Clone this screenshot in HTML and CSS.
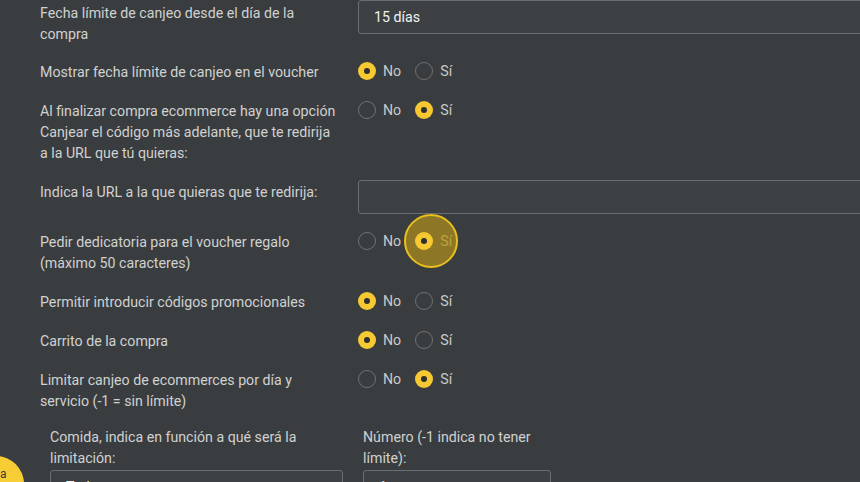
FILE: index.html
```html
<!DOCTYPE html>
<html lang="es">
<head>
<meta charset="utf-8">
<title>Configuración voucher</title>
<link rel="stylesheet" href="styles.css">
</head>
<body>
<div class="form">
  <div class="row row-input-first">
    <div class="label label-top">Fecha límite de canjeo desde el día de la compra</div>
    <div class="control"><div class="input">15 días</div></div>
  </div>

  <div class="row">
    <div class="label">Mostrar fecha límite de canjeo en el voucher</div>
    <div class="control">
      <div class="radios">
        <span class="radio checked"></span><span class="opt">No</span>
        <span class="radio"></span><span class="opt">Sí</span>
      </div>
    </div>
  </div>

  <div class="row">
    <div class="label">Al finalizar compra ecommerce hay una opción Canjear el código más adelante, que te redirija a la URL que tú quieras:</div>
    <div class="control">
      <div class="radios">
        <span class="radio"></span><span class="opt">No</span>
        <span class="radio checked"></span><span class="opt">Sí</span>
      </div>
    </div>
  </div>

  <div class="row">
    <div class="label label-input">Indica la URL a la que quieras que te redirija:</div>
    <div class="control"><div class="input"></div></div>
  </div>

  <div class="row">
    <div class="label">Pedir dedicatoria para el voucher regalo (máximo 50 caracteres)</div>
    <div class="control">
      <div class="radios">
        <span class="radio"></span><span class="opt">No</span>
        <span class="radio-wrap"><span class="ripple"></span><span class="radio checked"></span></span><span class="opt opt-dim">Sí</span>
      </div>
    </div>
  </div>

  <div class="row row-lower">
    <div class="label">Permitir introducir códigos promocionales</div>
    <div class="control">
      <div class="radios">
        <span class="radio checked"></span><span class="opt">No</span>
        <span class="radio"></span><span class="opt">Sí</span>
      </div>
    </div>
  </div>

  <div class="row">
    <div class="label">Carrito de la compra</div>
    <div class="control">
      <div class="radios">
        <span class="radio checked"></span><span class="opt">No</span>
        <span class="radio"></span><span class="opt">Sí</span>
      </div>
    </div>
  </div>

  <div class="row">
    <div class="label">Limitar canjeo de ecommerces por día y servicio (-1 = sin límite)</div>
    <div class="control">
      <div class="radios">
        <span class="radio"></span><span class="opt">No</span>
        <span class="radio checked"></span><span class="opt">Sí</span>
      </div>
    </div>
  </div>

  <div class="subrow">
    <div class="subcol subcol-wide">
      <div class="label">Comida, indica en función a qué será la limitación:</div>
      <div class="input input-select">Todos<span class="caret"></span></div>
    </div>
    <div class="subcol subcol-narrow">
      <div class="label">Número (-1 indica no tener límite):</div>
      <div class="input">1</div>
    </div>
  </div>
</div>

<div class="fab"><span class="fab-text">a</span></div>
</body>
</html>
```

FILE: styles.css
```css
html, body {
  margin: 0;
  padding: 0;
}

body {
  background: #3a3d3f;
  font-family: Roboto, "Noto Sans", "Liberation Sans", sans-serif;
  font-size: 14.2px;
  color: #d0d1d1;
  width: 860px;
  height: 482px;
  overflow: hidden;
  position: relative;
}

.form {
  width: 1100px;
  padding-left: 40px;
  display: flex;
  flex-direction: column;
  gap: 17px;
}

.row {
  display: grid;
  grid-template-columns: 318px 1fr;
  align-items: start;
  min-height: 22px;
}

.row-lower {
  margin-top: 1px;
}

.label {
  line-height: 21px;
  max-width: 297px;
  color: #d0d1d1;
  padding-top: 1px;
  margin-bottom: -1px;
}

.label-top {
  padding-top: 3px;
}

.label-input {
  padding-top: 2px;
}

.control {
  min-width: 0;
}

.input {
  box-sizing: border-box;
  height: 34px;
  border: 1px solid #6b6e70;
  border-radius: 3px;
  background: #3e4143;
  color: #f2f2f2;
  font-size: 14.2px;
  line-height: 32px;
  padding: 0 15px;
  position: relative;
}

.radios {
  display: flex;
  align-items: center;
  height: 16px;
  margin-top: 2px;
}

.radio {
  display: block;
  box-sizing: border-box;
  width: 18px;
  height: 18px;
  border-radius: 50%;
  border: 1.5px solid #6e7072;
  flex: none;
  position: relative;
}

.radio.checked {
  border: none;
  background: #f6c932;
}

.radio.checked::after {
  content: "";
  position: absolute;
  left: 6px;
  top: 6px;
  width: 6px;
  height: 6px;
  border-radius: 50%;
  background: #2e2f30;
}

.opt {
  margin-left: 7px;
  margin-right: 14px;
  color: #c9caca;
  line-height: 16px;
}

.opt-dim {
  color: #b8a878;
}

.radio-wrap {
  position: relative;
  display: block;
  width: 18px;
  height: 18px;
  flex: none;
}

.ripple {
  position: absolute;
  left: -11px;
  top: -18px;
  width: 54px;
  height: 54px;
  box-sizing: border-box;
  border-radius: 50%;
  border: 2px solid #e8bf1c;
  background: rgba(196, 158, 24, 0.6);
}

.radio-wrap .radio {
  z-index: 1;
}

.subrow {
  display: flex;
  gap: 20px;
  padding-left: 10px;
  margin-top: -2px;
}

.subcol {
  display: flex;
  flex-direction: column;
  gap: 2px;
}

.subcol-wide {
  width: 293px;
}

.subcol-narrow {
  width: 188px;
}

.subcol .label {
  max-width: none;
}

.input-select .caret {
  position: absolute;
  right: 12px;
  top: 13px;
  width: 6px;
  height: 6px;
  border-right: 1.5px solid #cfcfcf;
  border-bottom: 1.5px solid #cfcfcf;
  transform: rotate(45deg);
}

.fab {
  position: absolute;
  left: -32px;
  top: 456px;
  width: 56px;
  height: 56px;
  border-radius: 50%;
  background: #f7cd35;
}

.fab-text {
  position: absolute;
  left: 32px;
  top: 11px;
  font-size: 12px;
  color: #3a3a3a;
}
```
